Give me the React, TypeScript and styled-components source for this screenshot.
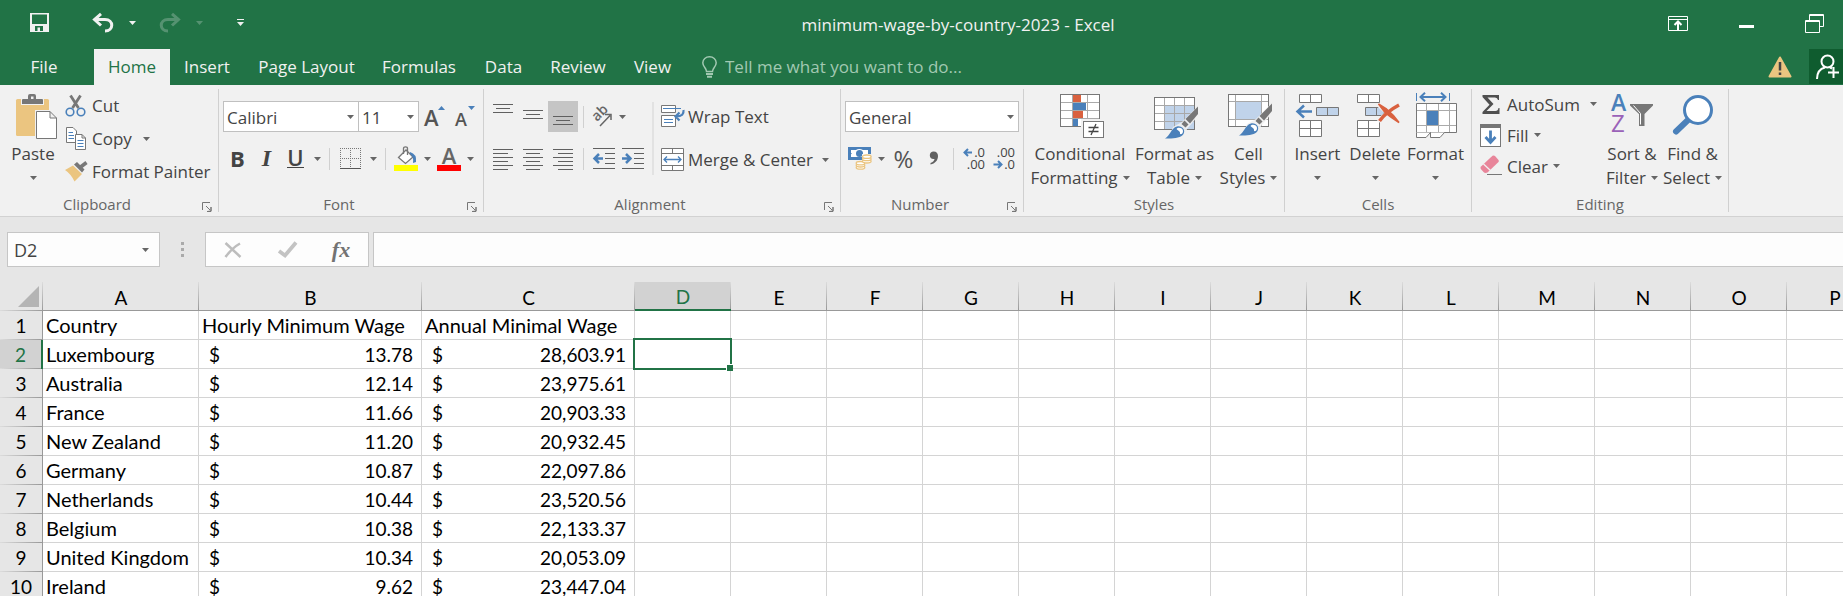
import React from "react";
import styled, { createGlobalStyle, css } from "styled-components";

const ui = `"Open Sans", "Noto Sans", sans-serif`;
const sheet = `Lato, "Open Sans", sans-serif`;
const green = "#217346";
const blue = "#4a80ba";
const gray = "#777777";
const tan = "#ebc580";
const red = "#d9613f";

const GlobalStyle = createGlobalStyle`
  *, *::before, *::after { box-sizing: border-box; }
  html, body { margin: 0; height: 100%; }
  #root { height: 100%; }
  body { background: #e6e6e6; font-family: ${ui}; font-size: 17px; color: #444; }
  button, input, select { font: inherit; color: inherit; margin: 0; padding: 0; border: 0; background: none; border-radius: 0; outline: none; }
  svg { display: block; flex: none; overflow: visible; }
  svg text { font-family: ${ui}; }
`;

const Page = styled.div`
  display: flex;
  flex-direction: column;
  height: 100vh;
  overflow: hidden;
`;

/* ---------- title bar ---------- */
const TitleBar = styled.header`
  display: flex;
  align-items: stretch;
  height: 49px;
  background: ${green};
  color: #f1f1f1;
`;
const QuickAccess = styled.div`
  display: flex;
  flex: none;
  width: 272px;
  padding: 0 0 4px 19px;
`;
const QuickButton = styled.button<{ $w: number; $gap?: number; $dim?: boolean }>`
  display: flex;
  align-items: center;
  justify-content: center;
  width: ${(p) => p.$w}px;
  margin-left: ${(p) => p.$gap ?? 0}px;
  opacity: ${(p) => (p.$dim ? 0.25 : 1)};
`;
const Title = styled.h1`
  flex: 1;
  margin: 0;
  font-size: 17px;
  font-weight: 400;
  line-height: 50px;
  text-align: center;
  white-space: nowrap;
`;
const WindowButtons = styled.div`
  display: flex;
  flex: none;
  width: 199px;
  padding-bottom: 3px;
  overflow: hidden;
`;
const WindowButton = styled.button`
  display: flex;
  flex: none;
  align-items: center;
  justify-content: center;
  width: 68px;
`;

/* ---------- tabs ---------- */
const TabBar = styled.nav`
  display: flex;
  height: 36px;
  background: ${green};
  color: #f1f1f1;
`;
const Tab = styled.button<{ $w: number; $active?: boolean }>`
  flex: none;
  width: ${(p) => p.$w}px;
  line-height: 36px;
  text-align: center;
  white-space: nowrap;
  &:first-child {
    margin-right: 6px;
  }
  ${(p) =>
    p.$active &&
    css`
      background: #f1f1f1;
      color: ${green};
    `}
`;
const TellMe = styled.label`
  display: flex;
  flex: 1;
  align-items: center;
  gap: 8px;
  padding-left: 15px;
  color: #a2c9b2;
  input {
    width: 300px;
    height: 34px;
    margin-bottom: 2px;
  }
  input::placeholder {
    color: #a2c9b2;
    opacity: 1;
  }
`;
const WarnButton = styled.button`
  display: flex;
  align-items: center;
  justify-content: center;
  width: 58px;
`;
const ShareButton = styled.button`
  display: flex;
  align-items: center;
  justify-content: center;
  width: 34px;
  height: 35px;
  padding-left: 4px;
  background: #0f5c2f;
`;

/* ---------- ribbon ---------- */
const Ribbon = styled.div`
  display: flex;
  flex: none;
  background: #f1f1f1;
  border-bottom: 1px solid #d2d2d2;
`;
const GroupBox = styled.section<{ $w: number }>`
  display: flex;
  flex: none;
  flex-direction: column;
  width: ${(p) => p.$w}px;
  height: 131px;
`;
const GroupDivider = styled.div`
  flex: none;
  width: 1px;
  margin: 4px 0;
  background: #d0d0d0;
`;
const GroupBody = styled.div<{ $pad?: string }>`
  display: flex;
  height: 108px;
  padding: ${(p) => p.$pad ?? "4px 4px 0"};
`;
const GroupFooter = styled.div`
  display: flex;
  align-items: center;
  height: 23px;
  font-size: 15px;
  color: #666;
  h2 {
    flex: 1;
    margin: 0;
    padding-bottom: 2px;
    font-size: inherit;
    font-weight: 400;
    line-height: 20px;
    text-align: center;
  }
`;
const Launcher = styled.button`
  width: 24px;
  height: 20px;
  padding: 4px 0 0 8px;
`;
const BigButton = styled.button<{ $w: number }>`
  display: flex;
  flex: none;
  flex-direction: column;
  align-items: center;
  width: ${(p) => p.$w}px;
  padding-top: 3px;
  white-space: nowrap;
`;
const BigIcon = styled.span`
  height: 50px;
`;
const BigLine = styled.span`
  display: flex;
  align-items: center;
  gap: 5px;
  height: 24px;
  line-height: 24px;
`;
const Stack = styled.div<{ $pitch: number; $gap?: number; $w?: number; $pad?: string }>`
  display: flex;
  flex-direction: column;
  gap: ${(p) => p.$gap ?? 0}px;
  width: ${(p) => (p.$w ? `${p.$w}px` : "auto")};
  padding: ${(p) => p.$pad ?? "0"};
  > * {
    height: ${(p) => p.$pitch}px;
  }
`;
const RowButton = styled.button<{ $gap?: number }>`
  display: flex;
  align-items: center;
  white-space: nowrap;
  > span:first-child {
    display: flex;
    flex: none;
    width: 27px;
  }
  > svg {
    margin-left: ${(p) => p.$gap ?? 6}px;
  }
`;
const ToolRow = styled.div<{ $mt?: number }>`
  display: flex;
  align-items: center;
  height: 31px;
  margin-top: ${(p) => p.$mt ?? 0}px;
`;
const ToolButton = styled.button<{ $w?: number; $on?: boolean }>`
  display: flex;
  flex: none;
  align-items: center;
  justify-content: center;
  width: ${(p) => p.$w ?? 29}px;
  height: 31px;
  background: ${(p) => (p.$on ? "#c5c5c5" : "none")};
`;
const Letter = styled.span<{ $kind: "b" | "i" | "u" }>`
  margin-bottom: 2px;
  font-size: 22px;
  line-height: 24px;
  font-weight: 700;
  color: #444;
  ${(p) => p.$kind === "i" && `font-family: "Liberation Serif", serif; font-style: italic; font-size: 24px;`}
  ${(p) => p.$kind === "u" && `border-bottom: 1px solid #444; line-height: 20px; font-weight: 600;`}
`;
const Percent = styled.span`
  font-size: 24px;
  line-height: 28px;
  color: #555;
`;
const ToolSep = styled.i`
  flex: none;
  width: 1px;
  height: 22px;
  margin: 0 5px;
  background: #d0d0d0;
`;
const TallSep = styled.i`
  width: 2px;
  height: 73px;
  margin-top: 1px;
  background: #e2e2e2;
`;
const Combo = styled.div<{ $w: number }>`
  position: relative;
  width: ${(p) => p.$w}px;
  height: 31px;
  background: #fff;
  border: 1px solid #c0c0c0;
  & + & {
    border-left: 0;
  }
  select {
    width: 100%;
    height: 100%;
    padding: 2px 0 0 3px;
    appearance: none;
  }
  svg {
    position: absolute;
    top: 13px;
    right: 4px;
    pointer-events: none;
  }
`;
const Column = styled.div`
  display: flex;
  flex-direction: column;
`;

/* ---------- formula bar ---------- */
const FormulaBar = styled.div`
  display: flex;
  flex: none;
  height: 65px;
  padding: 15px 0 15px 7px;
`;
const NameBox = styled.div`
  display: flex;
  align-items: center;
  width: 153px;
  background: #fdfdfd;
  border: 1px solid #c6c6c6;
  input {
    flex: 1;
    min-width: 0;
    padding-left: 6px;
    font-size: 18px;
  }
  button {
    padding: 8px 10px;
  }
`;
const Dots = styled.div`
  display: flex;
  flex-direction: column;
  align-items: center;
  justify-content: center;
  gap: 3px;
  width: 45px;
  i {
    width: 3px;
    height: 3px;
    background: #aaa;
  }
`;
const FormulaTools = styled.div`
  display: flex;
  width: 164px;
  margin-right: 4px;
  background: #fdfdfd;
  border: 1px solid #c6c6c6;
  button {
    display: flex;
    flex: 1;
    align-items: center;
    justify-content: center;
  }
`;
const Fx = styled.span`
  font: italic 700 22px/24px "Liberation Serif", serif;
  color: #737373;
`;
const FormulaInput = styled.input`
  && {
    flex: 1;
    background: #fdfdfd;
    border: 1px solid #c6c6c6;
    border-right: 0;
  }
`;

/* ---------- worksheet ---------- */
const SheetView = styled.main`
  flex: 1;
  min-height: 0;
  overflow: hidden;
`;
const Sheet = styled.table`
  width: 1883px;
  table-layout: fixed;
  border-collapse: separate;
  border-spacing: 0;
  font-family: ${sheet};
  font-size: 19px;
  line-height: 27px;
  color: #000;
  th,
  td {
    height: 29px;
    padding: 0;
    font-weight: 400;
    white-space: nowrap;
  }
`;
const Corner = styled.th`
  background: linear-gradient(#dcdcdc, #999) right / 1px 100% no-repeat, linear-gradient(90deg, #dcdcdc, #999) bottom / 100% 1px no-repeat, #e6e6e6;
  svg {
    margin-left: 18px;
  }
`;
const ColHead = styled.th<{ $on?: boolean }>`
  background: linear-gradient(#dcdcdc, #999) right / 1px 100% no-repeat, ${(p) => (p.$on ? "#d2d2d2" : "#e6e6e6")};
  border-bottom: ${(p) => (p.$on ? `2px solid ${green}` : "1px solid #999")};
  color: ${(p) => (p.$on ? green : "#000")};
  line-height: 24px;
  && {
    padding-top: 3px;
  }
`;
const RowHead = styled.th<{ $on?: boolean }>`
  background: linear-gradient(90deg, #dcdcdc, #999) bottom / 100% 1px no-repeat, ${(p) => (p.$on ? "#d2d2d2" : "#e6e6e6")};
  border-right: ${(p) => (p.$on ? `2px solid ${green}` : "1px solid #999")};
  color: ${(p) => (p.$on ? green : "#000")};
`;
const Cell = styled.td`
  position: relative;
  background: #fff;
  border-right: 1px solid #d4d4d4;
  border-bottom: 1px solid #d4d4d4;
`;
const CellText = styled.div`
  padding-left: 3px;
  font-size: 20px;
`;
const Money = styled.div`
  display: flex;
  justify-content: space-between;
  padding: 0 8px 0 10px;
`;
const Selection = styled.div`
  position: absolute;
  z-index: 1;
  inset: -2px;
  border: 2px solid ${green};
  &::after {
    content: "";
    position: absolute;
    right: -3px;
    bottom: -3px;
    width: 7px;
    height: 7px;
    background: ${green};
    border: solid #fff;
    border-width: 1px 0 0 1px;
  }
`;

/* ---------- icons ---------- */
const Caret = ({ color = "#666" }: { color?: string }) => (
  <svg width="7" height="4" viewBox="0 0 7 4">
    <path d="M0 0H7L3.5 4Z" fill={color} />
  </svg>
);
const SaveIcon = () => (
  <svg width="19" height="19" viewBox="0 0 19 19">
    <path fillRule="evenodd" fill="#f1f1f1" d="M0 0H19V19H0ZM2 1.5V11H17V1.5ZM5 13V18H7.5V14.5H10V18H13V13Z" />
  </svg>
);
const UndoIcon = ({ flip }: { flip?: boolean }) => (
  <svg width="22" height="20" viewBox="0 0 22 20" fill="none" stroke="#f1f1f1" strokeWidth="3">
    <g transform={flip ? "translate(22 0) scale(-1 1)" : undefined}>
      <path d="M2 6.500H13C22 6.500 22 18 13 18" />
      <path d="M9 0.800L2.500 6.500L9 12.500" />
    </g>
  </svg>
);
const CustomizeIcon = () => (
  <svg width="7" height="7" viewBox="0 0 7 7" fill="#f1f1f1">
    <path d="M0 0H7V1H0ZM0 3H7L3.500 7Z" />
  </svg>
);
const RibbonOptionsIcon = () => (
  <svg width="20" height="15" viewBox="0 0 20 15" fill="none" stroke="#fff">
    <path d="M0.500 0.500H19.500V14.500H0.500ZM0.500 3.500H19.500" />
    <path d="M10 14V6M6.500 9L10 5.500L13.500 9" strokeWidth="2" />
  </svg>
);
const MinimizeIcon = () => (
  <svg width="15" height="9" viewBox="0 0 15 9">
    <rect y="6" width="15" height="3" fill="#fff" />
  </svg>
);
const RestoreIcon = () => (
  <svg width="19" height="19" viewBox="0 0 19 19" fill="none" stroke="#fff">
    <path d="M4.500 6V0.500H18.500V12.500H15M4.500 1.500H18.500" />
    <path d="M0.500 6.500H14.500V18.500H0.500ZM0.500 7.500H14.500" />
  </svg>
);
const BulbIcon = () => (
  <svg width="15" height="22" viewBox="0 0 15 22" fill="none" stroke="#a2c9b2" strokeWidth="1.500">
    <path d="M4.500 15.500C4.500 12 0.800 11 0.800 6.800C0.800 3.200 3.800 0.800 7.500 0.800S14.200 3.200 14.200 6.800C14.200 11 10.500 12 10.500 15.500Z" />
    <path d="M4 18H11M5 20.800H10" strokeWidth="2" />
  </svg>
);
const WarnIcon = () => (
  <svg width="24" height="22" viewBox="0 0 24 22">
    <path d="M12 1.500L22.500 20.500H1.500Z" fill={tan} stroke={tan} strokeWidth="2" strokeLinejoin="round" />
    <path d="M12 6V14.500M12 16.500V19" stroke="#444" strokeWidth="2.500" />
  </svg>
);
const PersonIcon = () => (
  <svg width="24" height="26" viewBox="0 0 24 26" fill="none" stroke="#fff" strokeWidth="2">
    <circle cx="11.500" cy="7.500" r="6" />
    <path d="M1 25C1 18 5 14.500 9 13.500M14 13.500L16 14.500M17.500 13V24M12 18.500H23" />
  </svg>
);
const LauncherIcon = () => (
  <svg width="10" height="10" viewBox="0 0 10 10" fill="none" stroke={gray}>
    <path d="M0.500 8V0.500H8M4 4L8 8" />
    <path d="M9 5V9.500H5L9 9Z" fill={gray} />
  </svg>
);
const PasteIcon = () => (
  <svg width="48" height="48" viewBox="-6 0 48 48">
    <rect x="1" y="7" width="33" height="37" rx="1.500" fill={tan} />
    <path d="M6 13V6H12V3.500Q12 1 15 1H19Q22 1 22 3.500V6H29V13Z" fill="#f1f1f1" />
    <path fillRule="evenodd" d="M7 12V8Q7 7 8 7H13V4Q13 2 15 2H19Q21 2 21 4V7H27Q28 7 28 8V12ZM16 4.500V7H18.500V4.500Z" fill={gray} />
    <path d="M20 18H36L43 25V48H20Z" fill="#f1f1f1" />
    <path d="M21.500 19.500H35L41.500 26V46.500H21.500ZM35 19.500V26H41.500" fill="#fff" stroke={gray} />
  </svg>
);
const CutIcon = () => (
  <svg width="21" height="22" viewBox="0 0 21 22" fill="none">
    <path d="M5.500 0.500L13.500 13M15.500 0.500L7.500 13" stroke={gray} strokeWidth="2.800" />
    <circle cx="5" cy="17" r="3.800" stroke={blue} strokeWidth="1.600" />
    <circle cx="16" cy="17" r="3.800" stroke={blue} strokeWidth="1.600" />
  </svg>
);
const CopyIcon = () => (
  <svg width="22" height="23" viewBox="0 0 22 23" fill="#fff" stroke={gray}>
    <path d="M1.500 0.500H8L11.500 4V15.500H1.500Z" />
    <path d="M3.500 5.500H8M3.500 8.500H9M3.500 11.500H9" stroke={blue} />
    <path d="M10.500 7.500H17L20.500 11V22.500H10.500ZM17 7.500V11H20.500" />
    <path d="M12.500 13.500H18.500M12.500 16.500H18.500M12.500 19.500H18.500" stroke={blue} />
  </svg>
);
const PainterIcon = () => (
  <svg width="23" height="21" viewBox="0 0 23 21">
    <path d="M0 9L8 4.500L17 13L9.500 20.500Q6 13 0 9Z" fill={tan} />
    <path d="M9 3.500L12 1L19.500 8.500L17 11.500Z" fill={gray} />
    <path d="M15 6.500L21.500 1.500" stroke={gray} strokeWidth="3.600" />
  </svg>
);
const FontSizeIcon = ({ down }: { down?: boolean }) => (
  <svg width="22" height="23" viewBox="0 0 22 23">
    <text x="0" y="21" fontSize={down ? 18 : 22} fontWeight="600" fill="#555">A</text>
    <path d={down ? "M13 1H20L16.500 5Z" : "M14 5H21L17.500 1Z"} fill={blue} />
  </svg>
);
const BordersIcon = () => (
  <svg width="21" height="21" viewBox="0 0 21 21" fill="none" stroke={gray}>
    <path d="M0 0.500H21M0 10.500H21M0.500 0V21M10.500 0V21M20.500 0V21" strokeDasharray="1 1" />
    <path d="M0 20.500H21" stroke="#555" />
  </svg>
);
const FillColorIcon = () => (
  <svg width="24" height="25" viewBox="0 0 24 25">
    <path d="M4.500 11.500L12 4L19 11L11.500 17.500Z" fill="#fff" stroke={gray} strokeWidth="1.300" />
    <path d="M9.500 8V2.500Q9.500 0.800 11.500 0.800T13.500 2.500V9" fill="none" stroke={gray} strokeWidth="1.300" />
    <path d="M16 6Q23 8 22 16L19 17Q20 11 16 8Z" fill={blue} />
    <rect y="19" width="24" height="6" fill="#ff0" />
  </svg>
);
const FontColorIcon = () => (
  <svg width="24" height="25" viewBox="0 0 24 25">
    <text x="12" y="18" fontSize="22" fontWeight="600" textAnchor="middle" fill="#666">A</text>
    <rect y="19" width="24" height="6" fill="red" />
  </svg>
);
/* Rows of text: 20px lines with shorter ones between, aligned left, centre or right. */
const Lines = ({ ys, align = "mid" }: { ys: number[]; align?: "left" | "mid" | "right" }) => (
  <svg width="20" height="25" viewBox="0 0 20 25" stroke="#606060">
    {ys.map((y, i) => {
      const short = i % 2 === 1;
      const x = !short || align === "left" ? 0 : align === "mid" ? 3 : 5;
      return <path key={y} d={`M${x} ${y + 0.5}H${x + (short ? (align === "mid" ? 14 : 15) : 20)}`} />;
    })}
  </svg>
);
const OrientationIcon = () => (
  <svg width="22" height="22" viewBox="0 0 22 22">
    <text transform="translate(6 16) rotate(-45)" fontSize="14" fontWeight="600" fill="#666">ab</text>
    <path d="M9 20L19 9.500M14 8.500H20V14" fill="none" stroke="#666" strokeWidth="1.500" />
  </svg>
);
const IndentIcon = ({ out }: { out?: boolean }) => (
  <svg width="22" height="21" viewBox="0 0 22 21" fill="none" stroke="#606060">
    <path d="M0 0.500H22M12 5.500H22M12 10.500H22M12 15.500H22M0 20.500H22" />
    <path d={out ? "M2 10.500H10M6 6L1.500 10.500L6 15" : "M0 10.500H8M4 6L8.500 10.500L4 15"} stroke={blue} strokeWidth="2.500" />
  </svg>
);
const WrapIcon = () => (
  <svg width="24" height="23" viewBox="0 0 24 23" fill="#fff" stroke={gray}>
    <path d="M0.500 0.500H14.500V7.500H0.500ZM0.500 10.500H14.500V21.500H0.500Z" />
    <path d="M2 3.500H20M3 14.500H12M3 17.500H12" stroke={blue} />
    <path d="M22.500 5C23 9 21 11.500 15 11.500M18.500 7.500L14.500 11.500L18.500 15.500" fill="none" stroke={blue} strokeWidth="2.200" />
  </svg>
);
const MergeIcon = () => (
  <svg width="24" height="23" viewBox="0 0 24 23" fill="#fff" stroke={gray}>
    <path d="M0.500 0.500H22.500V22.500H0.500ZM0.500 5.500H22.500M0.500 17.500H22.500M11.500 0.500V5.500M11.500 17.500V22.500" />
    <path d="M3 11.500H20M6 8.500L3 11.500L6 14.500M17 8.500L20 11.500L17 14.500" fill="none" stroke={blue} strokeWidth="1.300" />
  </svg>
);
const MoneyIcon = () => (
  <svg width="24" height="23" viewBox="0 0 24 23">
    <rect width="23" height="13" fill={blue} />
    <path d="M3 3H8Q11 1 15 3H20V10H3Z" fill="#fff" />
    <circle cx="11.500" cy="6.500" r="3.500" fill={blue} />
    <path d="M2 5.500L4 6.500L2 8Z" fill={blue} />
    <path d="M14 7H24V18H18V23H8V14H14Z" fill="#f1f1f1" />
    <g fill="#fff" stroke={tan} strokeWidth="1.300">
      <ellipse cx="12.500" cy="20.500" rx="4.300" ry="1.700" />
      <ellipse cx="12.500" cy="18.300" rx="4.300" ry="1.700" />
      <ellipse cx="12.500" cy="16.200" rx="4.300" ry="1.700" />
      <ellipse cx="18.800" cy="14.300" rx="4.300" ry="1.700" />
      <ellipse cx="18.800" cy="12" rx="4.300" ry="1.700" />
      <ellipse cx="18.800" cy="9.700" rx="4.300" ry="1.700" />
    </g>
  </svg>
);
const CommaIcon = () => (
  <svg width="10" height="15" viewBox="0 0 10 15">
    <path d="M4.500 0.500C7.500 0.500 9 2.500 9 5C9 9.500 6 12.500 1.500 13.500V12C4 11 5.500 9.500 5.500 8C2.500 8.500 0.800 6.800 0.800 4.300C0.800 2 2.500 0.500 4.500 0.500Z" fill="#606060" />
  </svg>
);
const DecimalIcon = ({ less }: { less?: boolean }) => (
  <svg width="23" height="25" viewBox="0 0 23 25">
    <g fontSize="13" fill="#444" textAnchor="end">
      <text x="22" y="11">{less ? ".00" : ".0"}</text>
      <text x="22" y="23">{less ? ".0" : ".00"}</text>
    </g>
    <path
      d={less ? "M0.500 18.500H8M5 15L8.500 18.500L5 22" : "M9 6.500H1.500M5 3L1.500 6.500L5 10"}
      fill="none"
      stroke={blue}
      strokeWidth="2"
    />
  </svg>
);
const Brush = () => (
  <g>
    <path d="M46 13V23L34 37Q33 44 27 47H10Q18 42 20 35L29 30Z" fill="#f1f1f1" opacity="0.900" />
    <path d="M45 14.500V22L37 31.500L32.500 27Z" fill={gray} />
    <path d="M31.500 28.500L35.500 32.500L32.500 35.500L28.500 32Z" fill={gray} />
    <path d="M12 46.500C17 44 18 36 24 34.500C29 33.500 33 38 30.500 42C28 46 20 47 12 46.500Z" fill={blue} />
    <path d="M23.500 37C25 34.800 30 36 30 39C30 42 28 42.500 27 42C27.500 39 25.500 39 23.500 37Z" fill="#fff" />
  </g>
);
const ConditionalIcon = () => (
  <svg width="46" height="48" viewBox="-2 0 46 48">
    <rect x="1.500" y="2.500" width="39" height="32" fill="#fff" />
    <path d="M1.500 10.500H40.500M1.500 18.500H40.500M1.500 26.500H40.500M13.500 2.500V34.500M28.500 2.500V34.500" stroke="#aaa" />
    <path d="M14 3H22V10H14ZM14 19H24V26H14Z" fill={red} />
    <path d="M14 11H27V18H14ZM14 27H19V34H14Z" fill={blue} />
    <rect x="1.500" y="2.500" width="39" height="32" fill="none" stroke={gray} />
    <rect x="22" y="27" width="24" height="21" fill="#f1f1f1" />
    <rect x="24.500" y="29.500" width="20" height="16" fill="#fff" stroke={gray} />
    <path d="M29.500 35.500H39.500M29.500 39.500H39.500M37 32L32 43" stroke="#444" strokeWidth="1.300" />
  </svg>
);
const FormatTableIcon = () => (
  <svg width="44" height="48" viewBox="0 0 44 48">
    <rect x="1.500" y="5.500" width="40" height="32" fill="#fff" />
    <rect x="11.500" y="13.500" width="30" height="24" fill="#c0d3ea" />
    <path d="M1.500 13.500H41.500M1.500 21.500H41.500M1.500 29.500H41.500M11.500 5.500V37.500M21.500 5.500V37.500M31.500 5.500V37.500" stroke="#a8a8a8" />
    <rect x="1.500" y="5.500" width="40" height="32" fill="none" stroke={gray} />
    <Brush />
  </svg>
);
const CellStylesIcon = () => (
  <svg width="44" height="48" viewBox="0 0 44 48">
    <rect x="1.500" y="2.500" width="40" height="32" fill="#fff" />
    <rect x="8.500" y="9.500" width="26" height="18" fill="#c0d3ea" />
    <path d="M1.500 9.500H41.500M1.500 27.500H41.500M8.500 2.500V34.500M34.500 2.500V34.500" stroke="#a8a8a8" />
    <rect x="1.500" y="2.500" width="40" height="32" fill="none" stroke={gray} />
    <g transform="translate(0 -3)">
      <Brush />
    </g>
  </svg>
);
const InsertIcon = () => (
  <svg width="46" height="48" viewBox="0 0 46 48" fill="#fff" stroke={gray}>
    <path d="M4.500 2.500H26.500V10.500H4.500ZM15.500 2.500V10.500M4.500 28.500H26.500V44.500H4.500ZM15.500 28.500V44.500M4.500 36.500H26.500" />
    <path d="M21.500 15.500H43.500V23.500H21.500ZM32.500 15.500V23.500" fill="#c0d3ea" />
    <path d="M17 19.500H3M9 13.500L2.500 19.500L9 25.500" fill="none" stroke={blue} strokeWidth="2.500" />
  </svg>
);
const DeleteIcon = () => (
  <svg width="50" height="48" viewBox="0 0 50 48" fill="#fff" stroke={gray}>
    <path d="M7.500 2.500H29.500V10.500H7.500ZM18.500 2.500V10.500M7.500 28.500H29.500V44.500H7.500ZM18.500 28.500V44.500M7.500 36.500H29.500" />
    <path d="M15.500 15.500H32L35 19.500L32 23.500H15.500ZM26.500 15.500V23.500" fill="#c0d3ea" />
    <path d="M29 13L48 30M49 13Q36 21 29 30" fill="none" stroke="#f1f1f1" strokeWidth="5" />
    <path d="M28.500 12L36 16.500Q44 23 49 30.500Q40 25 35 20.500Z" fill={red} stroke={red} strokeWidth="1.500" />
    <path d="M49 13Q36 20 29.500 29" fill="none" stroke={red} strokeWidth="3.500" />
  </svg>
);
const FormatIcon = () => (
  <svg width="42" height="48" viewBox="0 0 42 48" fill="none" stroke={gray}>
    <path d="M1.500 1V9M34.500 1V9" stroke={blue} />
    <path d="M5 5H31M10 0.800L5.500 5L10 9.200M26 0.800L30.500 5L26 9.200" stroke={blue} strokeWidth="2" />
    <path d="M1.500 11.500H41.500V40.500H1.500Z" fill="#fff" />
    <rect x="12" y="19" width="12" height="14" fill={blue} stroke="none" />
    <path d="M2 18.500H41M2 33.500H41M11.500 12V40M23.500 12V40M34.500 12V40" stroke="#aaa" />
    <path d="M1.500 40.500V45.500H11L15.500 40.500V45.500H25L29.500 40.500" fill="#fff" />
  </svg>
);
const SumIcon = () => (
  <svg width="20" height="19" viewBox="-2 0 20 19">
    <path d="M0.500 0H17V5H16Q15.500 2.500 13 2.500H5.500L11.500 9L4.500 16H13.500Q16 16 16.500 13H17.500V19H0.500V17L7.500 9.800L0.500 2Z" fill="#505050" />
  </svg>
);
const FillIcon = () => (
  <svg width="21" height="23" viewBox="0 0 21 23">
    <rect x="0.500" y="1.500" width="20" height="21" fill="#fff" stroke={gray} />
    <rect width="21" height="4" fill={gray} />
    <path d="M10.500 6.500V18M5.500 13L10.500 18.500L15.500 13" fill="none" stroke={blue} strokeWidth="2.800" />
  </svg>
);
const ClearIcon = () => (
  <svg width="22" height="23" viewBox="0 0 22 23">
    <path d="M12.500 0.800Q14 0 15 1L18.500 5Q19.200 6 18.500 7L7.500 17.500Q5 18.500 3.500 17L0.800 14Q0 12.500 1 11.500Z" fill="#e8859a" />
    <path d="M3.500 9L11 16" stroke="#f1f1f1" strokeWidth="1.300" />
    <path d="M7 19.500H22" stroke={gray} />
  </svg>
);
const SortIcon = () => (
  <svg width="44" height="48" viewBox="0 0 44 48">
    <text x="1" y="18.500" fontSize="23" fontWeight="600" fill={blue}>A</text>
    <text x="1" y="40" fontSize="24" fill="#9a62b8">Z</text>
    <path d="M20 12H43V13.500L34.500 22V34H29V22L20 13.500Z" fill={gray} />
    <path d="M23.500 13.500L30.500 21.500V32.500" fill="none" stroke="#fff" />
  </svg>
);
const FindIcon = () => (
  <svg width="44" height="48" viewBox="0 0 44 48">
    <path d="M17 28L5 39.500" stroke={blue} strokeWidth="6" strokeLinecap="round" />
    <circle cx="27" cy="18" r="13.500" fill="#fff" stroke={blue} strokeWidth="3" />
  </svg>
);
const CancelIcon = () => (
  <svg width="18" height="16" viewBox="0 0 18 16" fill="none" stroke="#bdbdbd" strokeWidth="2.500">
    <path d="M1.500 1L16.500 15M16 1.500Q8 6 1.500 15" />
  </svg>
);
const CheckIcon = () => (
  <svg width="19" height="17" viewBox="0 0 19 17">
    <path d="M1 10L7 14.500L18 1.500" fill="none" stroke="#c3c3c3" strokeWidth="3.800" />
  </svg>
);
const CornerIcon = () => (
  <svg width="21" height="21" viewBox="0 0 21 21">
    <path d="M21 0V21H0Z" fill="#b4b4b4" />
  </svg>
);

/* ---------- composed parts ---------- */
const Group = ({
  name,
  width,
  pad,
  launcher,
  children,
}: {
  name: string;
  width: number;
  pad?: string;
  launcher?: boolean;
  children: React.ReactNode;
}) => (
  <>
    <GroupBox $w={width} aria-label={name}>
      <GroupBody $pad={pad}>{children}</GroupBody>
      <GroupFooter>
        <h2>{name}</h2>
        {launcher && (
          <Launcher aria-label={`${name} settings`}>
            <LauncherIcon />
          </Launcher>
        )}
      </GroupFooter>
    </GroupBox>
    <GroupDivider />
  </>
);
const Big = ({ icon, lines, width }: { icon: React.ReactNode; lines: [string, string?]; width: number }) => (
  <BigButton $w={width}>
    <BigIcon>{icon}</BigIcon>
    <BigLine>{lines[0]}</BigLine>
    <BigLine>
      {lines[1]}
      <Caret />
    </BigLine>
  </BigButton>
);
const Select = ({ label, value, width }: { label: string; value: string; width: number }) => (
  <Combo $w={width}>
    <select aria-label={label}>
      <option>{value}</option>
    </select>
    <Caret />
  </Combo>
);
const More = ({ label }: { label: string }) => (
  <ToolButton $w={14} aria-label={label}>
    <Caret />
  </ToolButton>
);

const tabs: [string, number][] = [
  ["File", 88],
  ["Home", 76],
  ["Insert", 74],
  ["Page Layout", 125],
  ["Formulas", 100],
  ["Data", 69],
  ["Review", 80],
  ["View", 69],
];
const columns = "ABCDEFGHIJKLMNOP".split("");
const columnWidths = [156, 223, 213];
const wages: [string, string, string][] = [
  ["Luxembourg", "13.78", "28,603.91"],
  ["Australia", "12.14", "23,975.61"],
  ["France", "11.66", "20,903.33"],
  ["New Zealand", "11.20", "20,932.45"],
  ["Germany", "10.87", "22,097.86"],
  ["Netherlands", "10.44", "23,520.56"],
  ["Belgium", "10.38", "22,133.37"],
  ["United Kingdom", "10.34", "20,053.09"],
  ["Ireland", "9.62", "23,447.04"],
];

export default function App() {
  return (
    <Page>
      <GlobalStyle />
      <TitleBar>
        <QuickAccess>
          <QuickButton $w={40} aria-label="Save"><SaveIcon /></QuickButton>
          <QuickButton $w={38} $gap={25} aria-label="Undo"><UndoIcon /></QuickButton>
          <QuickButton $w={20} aria-label="Undo list"><Caret color="#f1f1f1" /></QuickButton>
          <QuickButton $w={38} $gap={9} $dim aria-label="Redo"><UndoIcon flip /></QuickButton>
          <QuickButton $w={20} $dim aria-label="Redo list"><Caret color="#f1f1f1" /></QuickButton>
          <QuickButton $w={24} $gap={19} aria-label="Customize toolbar"><CustomizeIcon /></QuickButton>
        </QuickAccess>
        <Title>minimum-wage-by-country-2023 - Excel</Title>
        <WindowButtons>
          <WindowButton aria-label="Ribbon display options"><RibbonOptionsIcon /></WindowButton>
          <WindowButton aria-label="Minimize"><MinimizeIcon /></WindowButton>
          <WindowButton aria-label="Restore"><RestoreIcon /></WindowButton>
        </WindowButtons>
      </TitleBar>
      <TabBar>
        {tabs.map(([name, w]) => (
          <Tab key={name} $w={w} $active={name === "Home"}>{name}</Tab>
        ))}
        <TellMe>
          <BulbIcon />
          <input placeholder="Tell me what you want to do..." aria-label="Tell me what you want to do" />
        </TellMe>
        <WarnButton aria-label="Warning"><WarnIcon /></WarnButton>
        <ShareButton aria-label="Share"><PersonIcon /></ShareButton>
      </TabBar>

      <Ribbon>
        <Group name="Clipboard" width={218} pad="4px 4px 0 6px" launcher>
          <Big width={54} icon={<PasteIcon />} lines={["Paste"]} />
          <Stack $pitch={33} $pad="0 0 0 5px">
            <RowButton><span><CutIcon /></span>Cut</RowButton>
            <RowButton $gap={11}><span><CopyIcon /></span>Copy<Caret /></RowButton>
            <RowButton><span><PainterIcon /></span>Format Painter</RowButton>
          </Stack>
        </Group>

        <Group name="Font" width={264} pad="16px 4px 0" launcher>
          <Column>
            <ToolRow>
              <Select label="Font" value="Calibri" width={136} />
              <Select label="Font size" value="11" width={60} />
              <ToolButton $w={32} aria-label="Increase font size"><FontSizeIcon /></ToolButton>
              <ToolButton aria-label="Decrease font size"><FontSizeIcon down /></ToolButton>
            </ToolRow>
            <ToolRow $mt={11}>
              <ToolButton aria-label="Bold"><Letter $kind="b">B</Letter></ToolButton>
              <ToolButton aria-label="Italic"><Letter $kind="i">I</Letter></ToolButton>
              <ToolButton aria-label="Underline"><Letter $kind="u">U</Letter></ToolButton>
              <More label="Underline styles" />
              <ToolSep />
              <ToolButton $w={31} aria-label="Borders"><BordersIcon /></ToolButton>
              <More label="Border styles" />
              <ToolSep />
              <ToolButton aria-label="Fill color"><FillColorIcon /></ToolButton>
              <More label="Fill colors" />
              <ToolButton aria-label="Font color"><FontColorIcon /></ToolButton>
              <More label="Font colors" />
            </ToolRow>
          </Column>
        </Group>

        <Group name="Alignment" width={356} pad="16px 4px 0" launcher>
          <Column>
            <ToolRow>
              <ToolButton $w={30} aria-label="Top align"><Lines ys={[0, 4, 8]} /></ToolButton>
              <ToolButton $w={30} aria-label="Middle align"><Lines ys={[6, 10, 14]} /></ToolButton>
              <ToolButton $w={30} $on aria-label="Bottom align"><Lines ys={[12, 16, 20]} /></ToolButton>
              <ToolSep />
              <ToolButton $w={26} aria-label="Orientation"><OrientationIcon /></ToolButton>
              <More label="Orientations" />
            </ToolRow>
            <ToolRow $mt={11}>
              <ToolButton $w={30} aria-label="Align left"><Lines align="left" ys={[3, 7, 11, 15, 19, 23]} /></ToolButton>
              <ToolButton $w={30} aria-label="Center"><Lines ys={[3, 7, 11, 15, 19, 23]} /></ToolButton>
              <ToolButton $w={30} aria-label="Align right"><Lines align="right" ys={[3, 7, 11, 15, 19, 23]} /></ToolButton>
              <ToolSep />
              <ToolButton aria-label="Decrease indent"><IndentIcon out /></ToolButton>
              <ToolButton aria-label="Increase indent"><IndentIcon /></ToolButton>
              <ToolButton as="span" $w={5} />
            </ToolRow>
          </Column>
          <TallSep />
          <Stack $pitch={31} $gap={12} $pad="0 0 0 7px">
            <RowButton><span><WrapIcon /></span>Wrap Text</RowButton>
            <RowButton $gap={9}><span><MergeIcon /></span>Merge &amp; Center<Caret /></RowButton>
          </Stack>
        </Group>

        <Group name="Number" width={182} pad="16px 4px 0" launcher>
          <Column>
            <ToolRow>
              <Select label="Number format" value="General" width={174} />
            </ToolRow>
            <ToolRow $mt={11}>
              <ToolButton aria-label="Accounting format"><MoneyIcon /></ToolButton>
              <More label="Currencies" />
              <ToolButton $w={31} aria-label="Percent"><Percent>%</Percent></ToolButton>
              <ToolButton aria-label="Comma style"><CommaIcon /></ToolButton>
              <ToolSep />
              <ToolButton $w={31} aria-label="Increase decimal"><DecimalIcon /></ToolButton>
              <ToolButton aria-label="Decrease decimal"><DecimalIcon less /></ToolButton>
            </ToolRow>
          </Column>
        </Group>

        <Group name="Styles" width={260}>
          <Big width={104} icon={<ConditionalIcon />} lines={["Conditional", "Formatting"]} />
          <Big width={85} icon={<FormatTableIcon />} lines={["Format as", "Table"]} />
          <Big width={63} icon={<CellStylesIcon />} lines={["Cell", "Styles"]} />
        </Group>

        <Group name="Cells" width={186}>
          <Big width={57} icon={<InsertIcon />} lines={["Insert"]} />
          <Big width={58} icon={<DeleteIcon />} lines={["Delete"]} />
          <Big width={63} icon={<FormatIcon />} lines={["Format"]} />
        </Group>

        <Group name="Editing" width={256} pad="4px 4px 0 8px">
          <Stack $pitch={30} $gap={1} $w={122}>
            <RowButton $gap={10}><span><SumIcon /></span>AutoSum<Caret /></RowButton>
            <RowButton $gap={5}><span><FillIcon /></span>Fill<Caret /></RowButton>
            <RowButton $gap={5}><span><ClearIcon /></span>Clear<Caret /></RowButton>
          </Stack>
          <Big width={60} icon={<SortIcon />} lines={["Sort &", "Filter"]} />
          <Big width={61} icon={<FindIcon />} lines={["Find &", "Select"]} />
        </Group>
      </Ribbon>

      <FormulaBar>
        <NameBox>
          <input aria-label="Name box" defaultValue="D2" />
          <button aria-label="Named ranges"><Caret /></button>
        </NameBox>
        <Dots><i /><i /><i /></Dots>
        <FormulaTools>
          <button aria-label="Cancel"><CancelIcon /></button>
          <button aria-label="Enter"><CheckIcon /></button>
          <button aria-label="Insert function"><Fx>fx</Fx></button>
        </FormulaTools>
        <FormulaInput aria-label="Formula" />
      </FormulaBar>

      <SheetView>
        <Sheet>
          <colgroup>
            <col style={{ width: 43 }} />
            {columns.map((c, i) => (
              <col key={c} style={{ width: columnWidths[i] ?? 96 }} />
            ))}
          </colgroup>
          <thead>
            <tr>
              <Corner aria-label="Select all"><CornerIcon /></Corner>
              {columns.map((c) => (
                <ColHead key={c} scope="col" $on={c === "D"}>{c}</ColHead>
              ))}
            </tr>
          </thead>
          <tbody>
            <tr>
              <RowHead scope="row">1</RowHead>
              <Cell><CellText>Country</CellText></Cell>
              <Cell><CellText>Hourly Minimum Wage</CellText></Cell>
              <Cell><CellText>Annual Minimal Wage</CellText></Cell>
              {columns.slice(3).map((c) => <Cell key={c} />)}
            </tr>
            {wages.map(([country, hourly, annual], i) => (
              <tr key={country}>
                <RowHead scope="row" $on={i === 0}>{i + 2}</RowHead>
                <Cell><CellText>{country}</CellText></Cell>
                <Cell><Money><span>$</span><span>{hourly}</span></Money></Cell>
                <Cell><Money><span>$</span><span>{annual}</span></Money></Cell>
                {columns.slice(3).map((c) => (
                  <Cell key={c}>{i === 0 && c === "D" && <Selection />}</Cell>
                ))}
              </tr>
            ))}
          </tbody>
        </Sheet>
      </SheetView>
    </Page>
  );
}
